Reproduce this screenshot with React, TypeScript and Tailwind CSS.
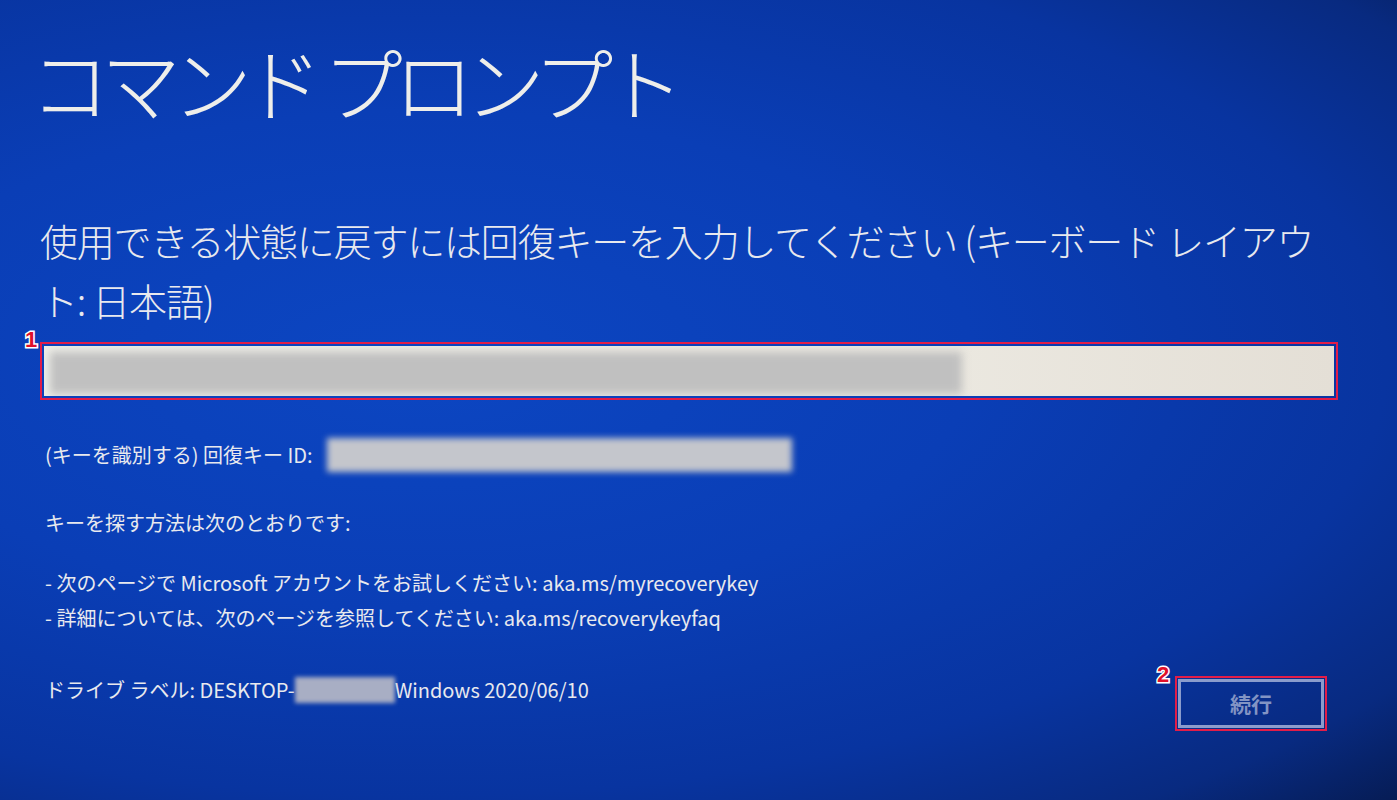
import React from 'react';

const JP = { fontFamily: '"Noto Sans CJK JP", "Noto Sans", sans-serif' };

// red numbered markers drawn over the photo
function Marker({ n, className }: { n: string; className: string }) {
  return (
    <span
      className={`absolute text-[22px] font-bold leading-none text-[#e0102a] ${className}`}
      style={{
        fontFamily: '"Liberation Sans", Arial, sans-serif',
        WebkitTextStroke: '3px #fff',
        paintOrder: 'stroke fill',
      }}
    >
      {n}
    </span>
  );
}

export default function App() {
  return (
    <main
      className="relative w-[1397px] h-[800px] overflow-hidden text-[#e8e9ee] bg-[radial-gradient(ellipse_at_30%_45%,#0c46c2_0%,#0a3eb6_40%,#0834a0_70%,#082a80_88%,#061c55_100%)]"
      style={JP}
    >
      <div className="flex flex-col pl-[40px] pr-[59px]">
        {/* Title */}
        <h1 className="mt-[40px] -ml-[10px] text-[80px] font-light leading-none tracking-[-9px] text-[#eeeeea]">
          コマンド プロンプト
        </h1>

        {/* Prompt */}
        <p className="mt-[90px] text-[38px] font-light leading-[60px] tracking-[-1.2px]">
          使用できる状態に戻すには回復キーを入力してください (キーボード レイアウト: 日本語)
        </p>

        {/* Recovery key input */}
        <div className="relative mt-[12px] h-[58px] border-2 border-[#e21d48] p-[2px]">
          <div className="relative h-full overflow-hidden bg-[linear-gradient(to_right,#eeeee8_0%,#ebe8e0_70%,#e4dfd6_100%)]">
            <div className="absolute left-[6px] top-[6px] bottom-[2px] w-[912px] bg-[#c0c0c0] blur-[4px]" />
          </div>
          <Marker n="1" className="-left-[17px] -top-[15px]" />
        </div>

        {/* Key ID */}
        <div className="mt-[37px] ml-[5px] flex items-center text-[20px] leading-[36px]">
          <span>(キーを識別する) 回復キー ID:</span>
          <span className="ml-[14px] h-[34px] w-[465px] bg-[#c4c6cc] blur-[3px]" />
        </div>

        <p className="mt-[32px] ml-[5px] text-[20px] leading-[36px]">キーを探す方法は次のとおりです:</p>

        <div className="mt-[24px] ml-[5px] flex flex-col text-[20px] leading-[35px]">
          <span>- 次のページで Microsoft アカウントをお試しください: aka.ms/myrecoverykey</span>
          <span>- 詳細については、次のページを参照してください: aka.ms/recoverykeyfaq</span>
        </div>

        {/* Drive label + continue */}
        <div className="mt-[39px] flex items-start justify-between">
          <div className="ml-[5px] flex items-center text-[20px] leading-[32px]">
            <span>ドライブ ラベル: DESKTOP-</span>
            <span className="h-[26px] w-[100px] bg-[#a8aec4] blur-[2px]" />
            <span>Windows 2020/06/10</span>
          </div>
          <div className="relative mt-[2px] mr-[11px] border-2 border-[#e21d48] p-[1px]">
            <button className="flex h-[49px] w-[146px] items-center justify-center border-[3px] border-[#8a9ccc] text-[21px] font-bold text-[#8294c4]">
              続行
            </button>
            <Marker n="2" className="-left-[20px] -top-[14px]" />
          </div>
        </div>
      </div>
    </main>
  );
}
